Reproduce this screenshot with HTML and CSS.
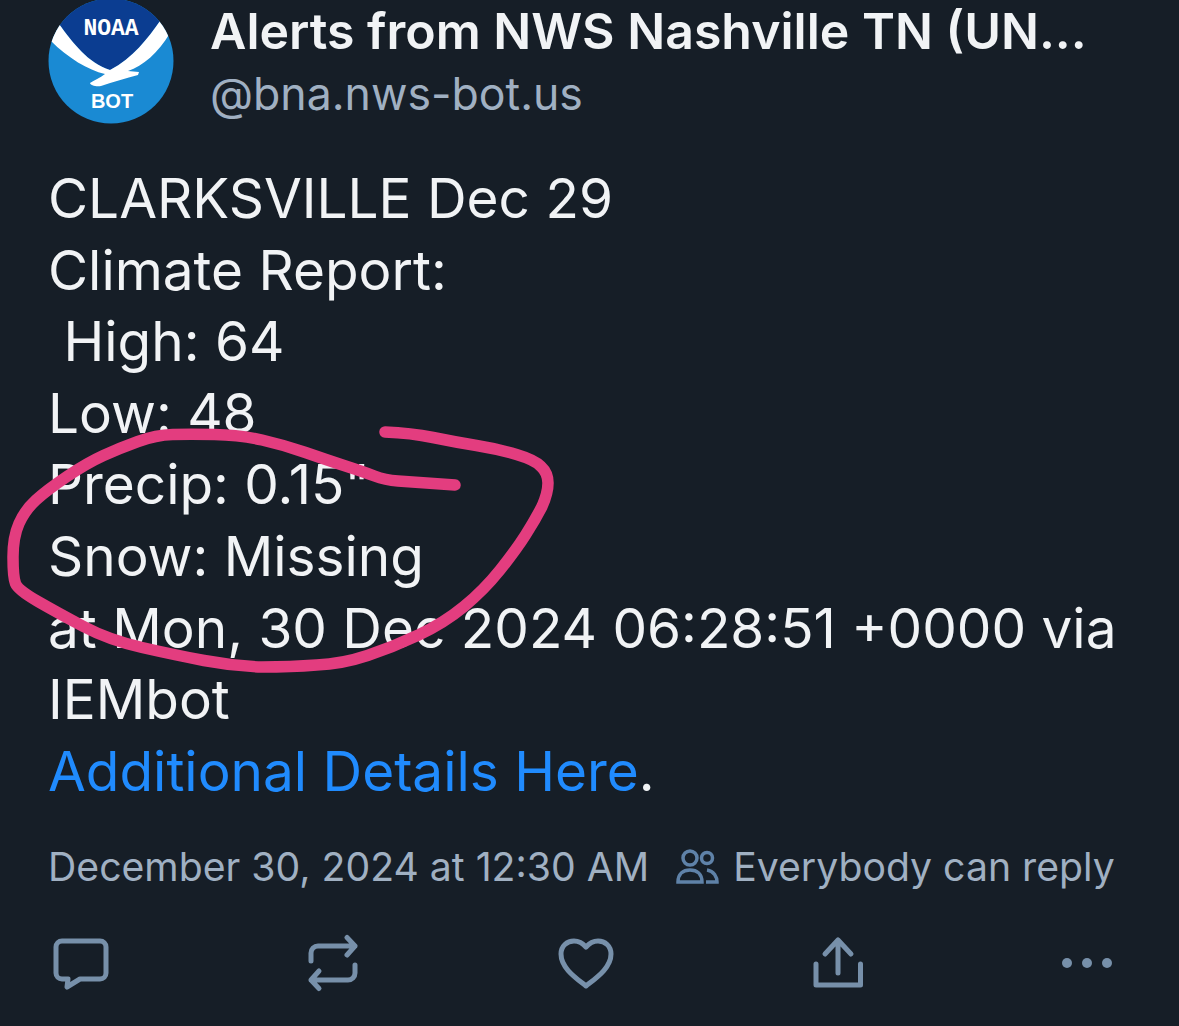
FILE: index.html
```html
<!DOCTYPE html>
<html lang="en">
  <head>
    <meta charset="UTF-8" />
    <title>Alerts from NWS Nashville TN</title>
    <link rel="stylesheet" href="styles.css">
  </head>
  <body>
    <main class="post">
      <header class="post-head">
        <svg class="avatar" viewBox="0 0 126 126">
          <defs>
            <clipPath id="disc"><circle cx="63" cy="63" r="62.5" /></clipPath>
          </defs>
          <g clip-path="url(#disc)">
            <rect width="126" height="126" fill="#1a8ad3" />
            <path d="M11 26C25 45 40 65 62 72C85 60 100 40 112 23L126 0H0Z" fill="#0b3d91" />
            <path d="M11 26C25 45 40 65 62 72C85 60 100 40 112 23L122 35C110 55 95 68 80 73L91 74L90 77C78 80 65 84 53 88C48 89 42 87 42 85C46 82 52 80 57 76C40 72 20 60 3 43Z" fill="#fff" />
          </g>
          <text class="logo-noaa" x="63" y="37" text-anchor="middle">NOAA</text>
          <text class="logo-bot" x="64" y="110" text-anchor="middle">BOT</text>
        </svg>
        <div class="names">
          <div class="display-name">Alerts from NWS Nashville TN (UN...</div>
          <div class="handle">@bna.nws-bot.us</div>
        </div>
      </header>

      <p class="post-text">CLARKSVILLE Dec 29<br>Climate Report:<br>&nbsp;High: 64<br>Low: 48<br>Precip: 0.15"<br>Snow: Missing<br>at Mon, 30 Dec 2024 06:28:51 +0000 via IEMbot<br><a href="#">Additional Details Here</a>.</p>

      <div class="meta">
        <span class="date">December 30, 2024 at 12:30 AM</span>
        <svg class="people" viewBox="0 0 44 36">
          <circle cx="14" cy="9" r="7" />
          <circle cx="31" cy="9" r="5.500" />
          <path d="M2 33C2 25 7 21 14 21C21 21 26 25 26 33Z" />
          <path d="M31 21C38 22 41 28 41 33H30" />
        </svg>
        <span class="reply">Everybody can reply</span>
      </div>

      <div class="actions">
        <svg class="action" viewBox="0 0 60 60">
          <path d="M11 7H49A6 6 0 0 1 55 13V39A6 6 0 0 1 49 45H29L16 53L17 45H11A6 6 0 0 1 5 39V13A6 6 0 0 1 11 7Z" />
        </svg>
        <svg class="action" viewBox="0 0 60 60">
          <path d="M45 3.500L53 12L45 21M53 12H16A7 7 0 0 0 9 19V27" />
          <path d="M17 37L9 46L17 54.500M9 46H46A7 7 0 0 0 53 39V31" />
        </svg>
        <svg class="action" viewBox="0 0 60 60">
          <path d="M32 52C22 44 7 34 7 20C7 12 13 7 20 7C25 7 29 9.500 32 13C35 9.500 39 7 44 7C51 7 57 12 57 20C57 34 42 44 32 52Z" />
        </svg>
        <svg class="action" viewBox="0 0 60 60">
          <path d="M20 20L33 6L46 20M33 6V39" />
          <path d="M11 30V51H55.500V30" />
        </svg>
        <svg class="action dots" viewBox="0 0 60 60">
          <circle cx="11" cy="29" r="5" />
          <circle cx="31" cy="29" r="5" />
          <circle cx="51" cy="29" r="5" />
        </svg>
      </div>

      <!-- marker scribble over the text -->
      <svg class="scribble" viewBox="0 0 1179 1026">
        <path d="M385 432Q411 433 433 437.500Q455 442 476.500 445.500Q498 449 516.500 454.500Q535 460 541 466.500Q548 473 548 483Q548 493 542 506.500Q535 520 525.500 535Q516 550 500 570Q484 590 464 606.500Q444 623 418.500 635Q393 647 367.500 655.500Q342 664 316.500 665Q291 667 262 667Q233 666 204 660.500Q175 655 142 647.500Q109 640 83.500 626.500Q58 613 38 601.500Q18 590 15.500 583.500Q13 577 13 557Q13 537 19 523.500Q25 510 36 500Q47 490 67 476.500Q87 463 103.500 455.500Q120 448 138 441.500Q156 435 172.500 434.500Q189 434 214.500 434.500Q240 435 262 440Q284 445 305.500 452.500Q327 460 345.500 466Q364 472 374.500 476Q385 480 398 481Q411 482 455 485" />
      </svg>
    </main>
  </body>
</html>
```

FILE: styles.css
```css
* {
  box-sizing: border-box;
  margin: 0;
  padding: 0;
}

html,
body {
  width: 100%;
  height: 100%;
  overflow: hidden;
}

body {
  font-family: "Inter", "Liberation Sans", sans-serif;
  background: #161e27;
  color: #f1f3f5;
}

.post {
  position: relative;
  width: 1179px;
  height: 1026px;
  padding: 0 48px;
  overflow: hidden;
}

/* Header */
.post-head {
  display: flex;
  gap: 36px;
  height: 163px;
}

.avatar {
  flex: none;
  width: 126px;
  height: 126px;
  margin-top: -2px;
}

.logo-noaa {
  font-family: "Liberation Mono", monospace;
  font-size: 23px;
  font-weight: 700;
  fill: #fff;
}

.logo-bot {
  font-family: "Liberation Sans", sans-serif;
  font-size: 20px;
  font-weight: 700;
  fill: #fff;
}

.names {
  min-width: 0;
  flex: 1;
  padding-top: 1px;
}

.display-name {
  font-size: 50px;
  font-weight: 600;
  line-height: 60px;
  white-space: nowrap;
}

.handle {
  font-size: 44.600px;
  line-height: 66px;
  color: #a0b0c2;
}

/* Body */
.post-text {
  font-size: 54.900px;
  line-height: 71.600px;
}

.post-text a {
  color: #208bfe;
  text-decoration: none;
}

/* Date row */
.meta {
  display: flex;
  align-items: center;
  margin-top: 35px;
  font-size: 39.200px;
  line-height: 50px;
  white-space: nowrap;
}

.date {
  color: #a0b0c2;
}

.people {
  width: 44px;
  height: 36px;
  margin-left: 27px;
  margin-right: 13px;
  fill: none;
  stroke: #5f82a8;
  stroke-width: 3.500;
}

.reply {
  color: #a0b0c2;
}

/* Action bar */
.actions {
  display: flex;
  justify-content: space-between;
  width: 1065px;
  margin-top: 42px;
  margin-left: 3px;
}

.action {
  width: 60px;
  height: 60px;
  fill: none;
  stroke: #7790aa;
  stroke-width: 5;
  stroke-linecap: round;
  stroke-linejoin: round;
}

.dots {
  fill: #7790aa;
  stroke: none;
}

/* Overlay */
.scribble {
  position: absolute;
  top: 0;
  left: 0;
  width: 1179px;
  height: 1026px;
  fill: none;
  stroke: #e33d7f;
  stroke-width: 11.500;
  stroke-linecap: round;
  stroke-linejoin: round;
}
```
